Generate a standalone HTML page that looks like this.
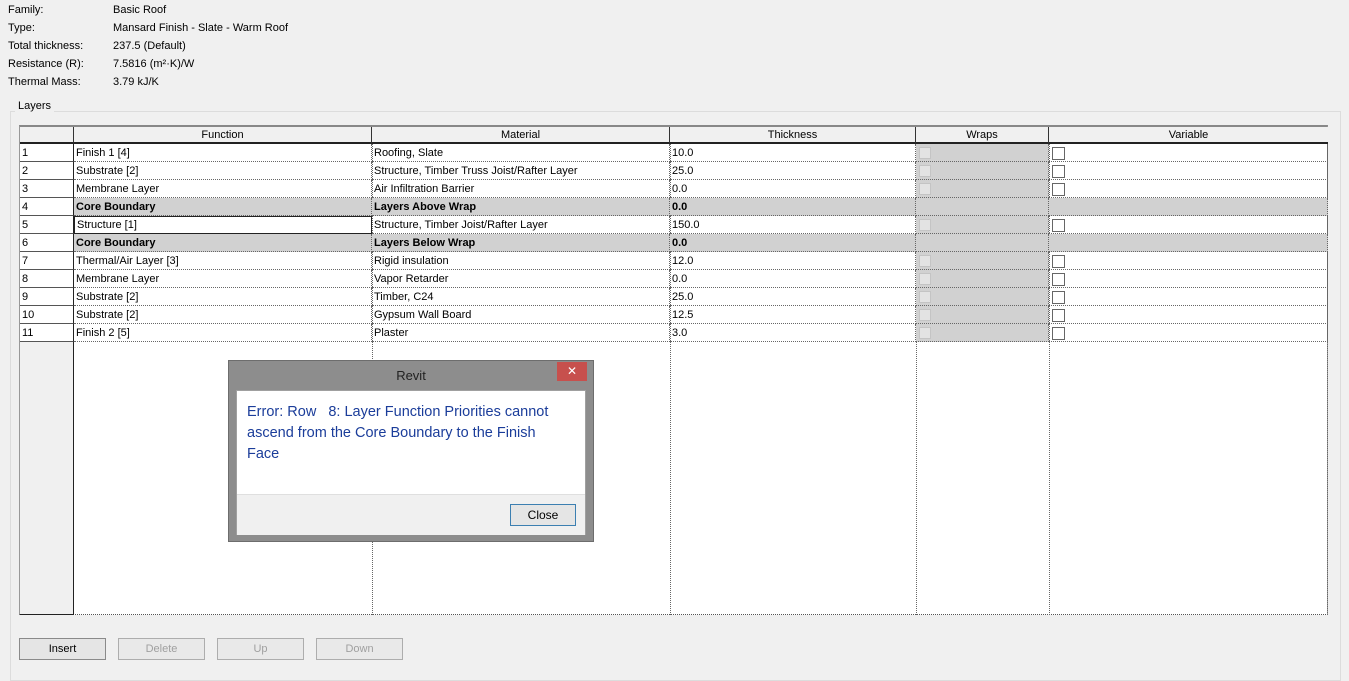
<!DOCTYPE html>
<html><head><style>
*{margin:0;padding:0;box-sizing:border-box}
body{width:1349px;height:669px;background:#f0f0f0;font-family:"Liberation Sans",sans-serif;font-size:11px;color:#000;position:relative;overflow:hidden}
.a{position:absolute}
.lbl{position:absolute;left:8px}
.val{position:absolute;left:113px}
.grp{position:absolute;left:10px;top:111px;width:1331px;height:570px;border:1px solid #dcdcdc}
.tbl{position:absolute;left:19px;top:125px;width:1309px;height:490px;background:#fff;border:1px solid #999;border-top:2px solid #888;border-bottom:1px dotted #555}
.hdr{position:absolute;top:0;height:17px;background:#f0f0f0;border-right:1px solid #333;border-bottom:2px solid #222;text-align:center;line-height:16px}
.num{position:absolute;left:0;width:54px;height:488px;background:#f0f0f0;border-right:1px solid #222;border-bottom:1px solid #222}
.row{position:absolute;left:0;height:18px;width:1308px}
.c{position:absolute;top:0;height:18px;line-height:19px;padding-left:2px;border-bottom:1px dotted #666;border-right:1px dotted #666;white-space:nowrap}
.n{left:0;width:54px;background:#fff;border-bottom:1px solid #555;border-right:1px solid #222}
.f{left:54px;width:298px}.m{left:352px;width:298px}.t{left:650px;width:246px}.w{left:896px;width:133px;background:#d1d1d1}.v{left:1029px;width:279px}
.core .c{background:#d1d1d1;font-weight:bold}
.core .n{background:#fff;font-weight:normal}
.cbd{position:absolute;left:3px;top:3px;width:12px;height:12px;border:1px solid #c4c4c4;background:#e3e3e3}
.cb{position:absolute;left:3px;top:3px;width:13px;height:13px;border:1px solid #666;background:#fff}
.vl{position:absolute;top:17px;height:471px;border-left:1px dotted #666}
.btn{position:absolute;top:638px;width:87px;height:22px;border:1px solid #adadad;background:#e9e9e9;text-align:center;line-height:21px;color:#a0a0a0}
</style></head><body>
<div class="lbl" style="top:4px">Family:</div><div class="val" style="top:4px">Basic Roof</div>
<div class="lbl" style="top:22px">Type:</div><div class="val" style="top:22px">Mansard Finish - Slate - Warm Roof</div>
<div class="lbl" style="top:40px">Total thickness:</div><div class="val" style="top:40px">237.5 (Default)</div>
<div class="lbl" style="top:58px">Resistance (R):</div><div class="val" style="top:58px">7.5816 (m²·K)/W</div>
<div class="lbl" style="top:76px">Thermal Mass:</div><div class="val" style="top:76px">3.79 kJ/K</div>
<div class="grp"></div>
<div class="a" style="left:15px;top:100px;background:#f0f0f0;padding:0 3px">Layers</div>
<div class="tbl">
<div class="num"></div>
<div class="vl" style="left:352px"></div><div class="vl" style="left:650px"></div><div class="vl" style="left:896px"></div><div class="vl" style="left:1029px"></div><div class="vl" style="left:1307px"></div>
<div class="hdr" style="left:0;width:54px"></div>
<div class="hdr" style="left:54px;width:298px">Function</div>
<div class="hdr" style="left:352px;width:298px">Material</div>
<div class="hdr" style="left:650px;width:246px">Thickness</div>
<div class="hdr" style="left:896px;width:133px">Wraps</div>
<div class="hdr" style="left:1029px;width:279px;border-right:none">Variable</div>

<div class="row" style="top:17px"><div class="c n">1</div><div class="c f">Finish 1 [4]</div><div class="c m">Roofing, Slate</div><div class="c t">10.0</div><div class="c w"><div class="cbd"></div></div><div class="c v"><div class="cb"></div></div></div>
<div class="row" style="top:35px"><div class="c n">2</div><div class="c f">Substrate [2]</div><div class="c m">Structure, Timber Truss Joist/Rafter Layer</div><div class="c t">25.0</div><div class="c w"><div class="cbd"></div></div><div class="c v"><div class="cb"></div></div></div>
<div class="row" style="top:53px"><div class="c n">3</div><div class="c f">Membrane Layer</div><div class="c m">Air Infiltration Barrier</div><div class="c t">0.0</div><div class="c w"><div class="cbd"></div></div><div class="c v"><div class="cb"></div></div></div>
<div class="row core" style="top:71px"><div class="c n">4</div><div class="c f">Core Boundary</div><div class="c m">Layers Above Wrap</div><div class="c t">0.0</div><div class="c w"></div><div class="c v"></div></div>
<div class="row" style="top:89px"><div class="c n">5</div><div class="c f" style="border:1px solid #222;line-height:17px">Structure [1]</div><div class="c m">Structure, Timber Joist/Rafter Layer</div><div class="c t">150.0</div><div class="c w"><div class="cbd"></div></div><div class="c v"><div class="cb"></div></div></div>
<div class="row core" style="top:107px"><div class="c n">6</div><div class="c f">Core Boundary</div><div class="c m">Layers Below Wrap</div><div class="c t">0.0</div><div class="c w"></div><div class="c v"></div></div>
<div class="row" style="top:125px"><div class="c n">7</div><div class="c f">Thermal/Air Layer [3]</div><div class="c m">Rigid insulation</div><div class="c t">12.0</div><div class="c w"><div class="cbd"></div></div><div class="c v"><div class="cb"></div></div></div>
<div class="row" style="top:143px"><div class="c n">8</div><div class="c f">Membrane Layer</div><div class="c m">Vapor Retarder</div><div class="c t">0.0</div><div class="c w"><div class="cbd"></div></div><div class="c v"><div class="cb"></div></div></div>
<div class="row" style="top:161px"><div class="c n">9</div><div class="c f">Substrate [2]</div><div class="c m">Timber, C24</div><div class="c t">25.0</div><div class="c w"><div class="cbd"></div></div><div class="c v"><div class="cb"></div></div></div>
<div class="row" style="top:179px"><div class="c n">10</div><div class="c f">Substrate [2]</div><div class="c m">Gypsum Wall Board</div><div class="c t">12.5</div><div class="c w"><div class="cbd"></div></div><div class="c v"><div class="cb"></div></div></div>
<div class="row" style="top:197px"><div class="c n">11</div><div class="c f">Finish 2 [5]</div><div class="c m">Plaster</div><div class="c t">3.0</div><div class="c w"><div class="cbd"></div></div><div class="c v"><div class="cb"></div></div></div>
</div>

<div class="btn" style="left:19px;color:#000;border-color:#8a8a8a;background:#e5e5e5">Insert</div>
<div class="btn" style="left:118px">Delete</div>
<div class="btn" style="left:217px">Up</div>
<div class="btn" style="left:316px">Down</div>

<div class="a" style="left:228px;top:360px;width:366px;height:182px;background:#8d8d8d;border:1px solid #6d6d6d">
 <div class="a" style="left:0;top:7px;width:364px;text-align:center;font-size:13px;color:#222">Revit</div>
 <div class="a" style="left:328px;top:1px;width:30px;height:19px;background:#c7504d;color:#fff;text-align:center;line-height:18px;font-size:12px">✕</div>
 <div class="a" style="left:7px;top:29px;width:350px;height:145px;background:#fff;border:1px solid #a0a0a0">
  <div class="a" style="left:10px;top:11px;width:322px;font-size:14.5px;line-height:21px;color:#1b3d9a">Error: Row &nbsp;&nbsp;8: Layer Function Priorities cannot ascend from the Core Boundary to the Finish Face</div>
  <div class="a" style="left:0;top:103px;width:348px;height:41px;background:#f0f0f0;border-top:1px solid #dfdfdf">
   <div class="a" style="left:273px;top:9px;width:66px;height:22px;border:1px solid #3c7fb1;background:#e5e5e5;text-align:center;line-height:20px;font-size:12px">Close</div>
  </div>
 </div>
</div>
</body></html>
